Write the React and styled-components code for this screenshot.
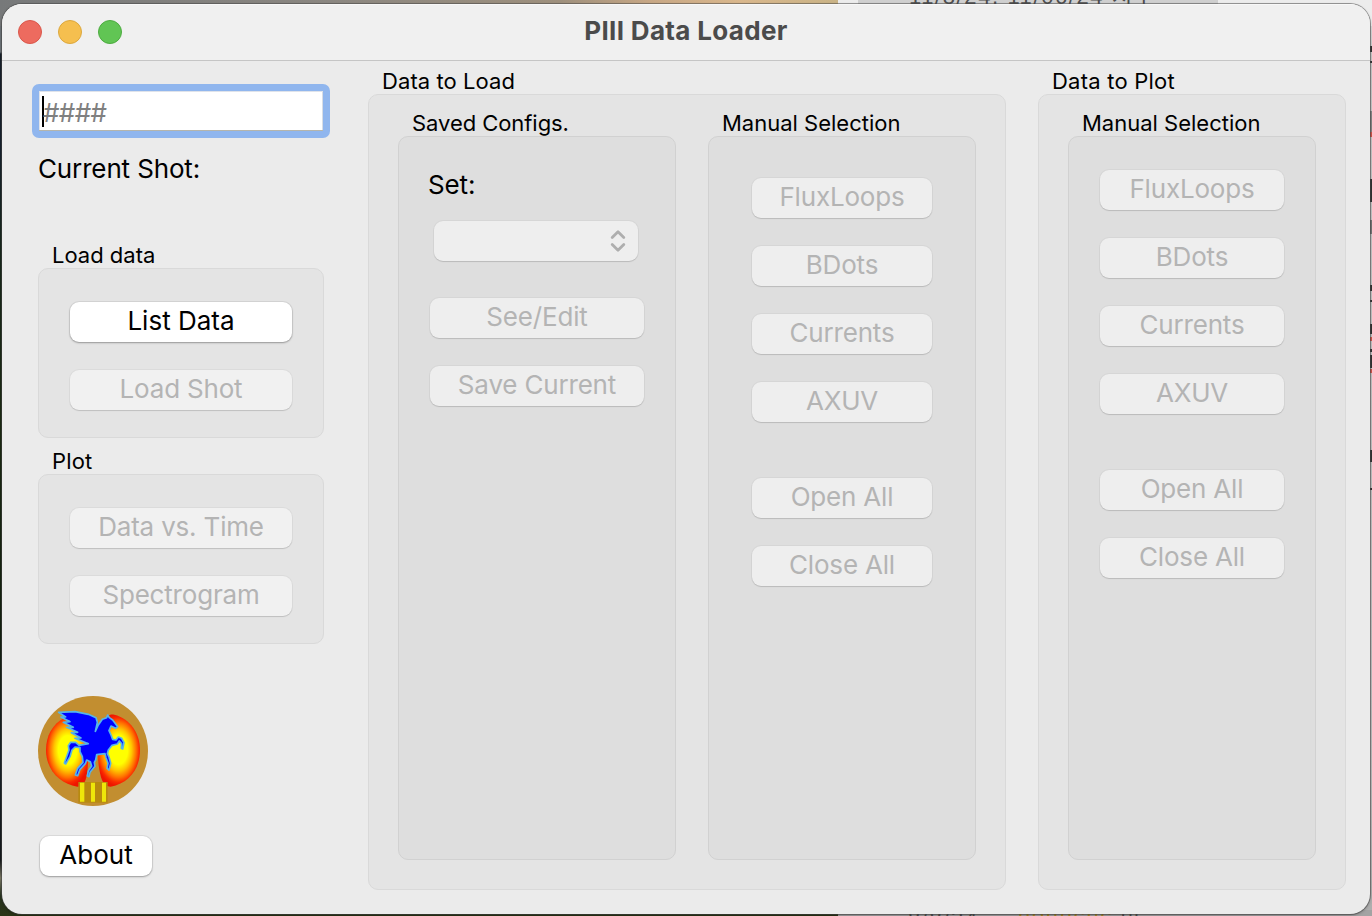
import React from "react";
import styled, { createGlobalStyle } from "styled-components";

const GlobalStyle = createGlobalStyle`
  * { box-sizing: border-box; }
  html, body { margin: 0; padding: 0; }
  body {
    width: 1372px;
    height: 916px;
    overflow: hidden;
    font-family: Inter, "Liberation Sans", "Noto Sans CJK KR", sans-serif;
    color: #000;
  }
`;

const Desktop = styled.div`
  display: grid;
  width: 1372px;
  height: 916px;
  overflow: hidden;
  & > * { grid-area: 1 / 1; }
`;

const Backdrop = styled.div`
  display: grid;
  grid-template-columns: 838px 1fr;
`;

const Landscape = styled.div`
  background:
    linear-gradient(90deg, #77797a 0, #8b8781 330px, #9e907d 560px, #c7a785 650px, #d9b78c 740px, #c9b386 838px) 0 0 / 100% 26px no-repeat,
    linear-gradient(180deg, #6d7479 26px, #6d7479 52px, #18202b 54px, #17222e 150px, #19291c 250px, #1d2c14 420px, #14210f 630px, #1a232a 760px, #15191b 860px, #7d7b67 878px, #27331f 896px, #2b3416 916px);
`;

const Sheet = styled.div`
  display: flex;
  flex-direction: column;
  justify-content: space-between;
  background: linear-gradient(180deg, #e9e9e9 0, #c9c9c9 60px, #bdbdbd 780px, #adadad 100%);
`;

const SheetRow = styled.div`
  display: flex;
  height: ${(p) => p.$height}px;
  overflow: hidden;
  padding-left: ${(p) => (p.$top ? 20 : 70)}px;
  background: ${(p) => (p.$top ? "#ececec" : "#a3a3a3")};
`;

const SheetCell = styled.div`
  flex: none;
  width: ${(p) => p.$width}px;
  height: 100%;
  padding-left: ${(p) => p.$inset || 0}px;
  background: ${(p) => p.$fill || "transparent"};
  color: ${(p) => p.$color || "#4d4d4d"};
  font: 22px/20px "Liberation Sans", "Noto Sans CJK KR", sans-serif;
  letter-spacing: ${(p) => p.$tracking || 0}px;
  white-space: pre;
`;

const CellText = styled.span`
  display: block;
  margin-top: ${(p) => p.$shift}px;
`;

const EdgeMarks = styled.div`
  justify-self: end;
  display: flex;
  flex-direction: column;
  width: 2px;
  padding-top: 46px;
`;

const Mark = styled.div`
  height: ${(p) => p.$h}px;
  margin-bottom: ${(p) => p.$after}px;
  background: ${(p) => p.$c || "#333"};
`;

const Window = styled.main`
  display: flex;
  flex-direction: column;
  width: 1368px;
  height: 910px;
  margin: 4px 0 0 2px;
  border-radius: 20px;
  overflow: hidden;
  background: #ebebeb;
  box-shadow: 0 0 0 1px rgba(70, 70, 70, 0.5), 0 1px 3px rgba(0, 0, 0, 0.4);
`;

const TitleBar = styled.header`
  display: grid;
  grid-template-columns: 1fr auto 1fr;
  align-items: center;
  flex: none;
  height: 57px;
  padding: 0 16px 1px;
  background: #f0f0f0;
  border-top: 1px solid #f8f8f8;
  border-bottom: 1px solid #c5c5c5;
`;

const Lights = styled.div`
  display: flex;
  gap: 16px;
`;

const Light = styled.span`
  width: 24px;
  height: 24px;
  border-radius: 50%;
  background: ${(p) => p.$fill};
  border: 1px solid ${(p) => p.$edge};
`;

const Title = styled.h1`
  margin: 0;
  padding-bottom: 2px;
  font-size: 26px;
  font-weight: 700;
  line-height: 32px;
  letter-spacing: 0.33px;
  color: #4b4b4b;
`;

const Content = styled.div`
  display: flex;
  align-items: flex-start;
  padding-left: 36px;
`;

const Sidebar = styled.aside`
  display: flex;
  flex-direction: column;
  align-items: flex-start;
  width: 286px;
  margin-right: 44px;
  padding-top: 23px;
`;

const ShotField = styled.div`
  display: flex;
  align-items: center;
  width: 298px;
  height: 54px;
  margin-left: -6px;
  border: 7px solid #90b6ee;
  border-radius: 7px;
  background: #fff;
  box-shadow: inset 0 -1px 0 #b5b5ac, inset 1px 1px 0 #dfe3ea, inset -1px 0 0 #d8dde5;
  padding-left: 3px;
`;

const Caret = styled.span`
  width: 2px;
  height: 31px;
  background: #000;
`;

const Placeholder = styled.span`
  margin-left: -1px;
  padding-top: 3px;
  font-size: 26px;
  line-height: 32px;
  letter-spacing: -0.6px;
  color: #808080;
`;

const Label = styled.div`
  height: 32px;
  margin: ${(p) => p.$top || 0}px 0 0 ${(p) => p.$left || 0}px;
  font-size: 26px;
  line-height: 32px;
  letter-spacing: -0.14px;
  white-space: nowrap;
`;

const GroupShell = styled.section`
  width: ${(p) => p.$width}px;
  margin-top: ${(p) => p.$top || 0}px;
`;

const GroupTitle = styled.h2`
  height: 26px;
  margin: 0;
  padding-left: 14px;
  font-size: 22px;
  font-weight: 400;
  line-height: 26px;
  letter-spacing: ${(p) => p.$tracking || 0}px;
  white-space: nowrap;
`;

const GroupBox = styled.div`
  display: flex;
  flex-direction: ${(p) => (p.$row ? "row" : "column")};
  gap: ${(p) => p.$gap ?? 28}px;
  height: ${(p) => p.$height}px;
  padding: ${(p) => p.$pad};
  border: 1px solid ${(p) => (p.$deep ? "#d1d1d1" : "#d9d9d9")};
  border-radius: 10px;
  background: ${(p) => (p.$deep ? "#dedede" : "#e4e4e4")};
`;

const PushButton = styled.button`
  display: flex;
  flex: none;
  align-items: center;
  justify-content: center;
  width: ${(p) => p.$width || "100%"};
  height: 40px;
  margin: ${(p) => p.$top || 0}px 0 0 ${(p) => p.$left || 0}px;
  padding: 0 0 2px;
  border: 0;
  border-radius: 9px;
  background: ${(p) => (p.disabled ? (p.$deep ? "#eeeeee" : "#f1f1f1") : "#fff")};
  box-shadow: ${(p) =>
    p.disabled
      ? "0 0 0 1px rgba(0,0,0,.035), 0 1px 1px rgba(0,0,0,.13)"
      : "0 0 0 1px rgba(0,0,0,.06), 0 1px 2px rgba(0,0,0,.3)"};
  color: ${(p) => (p.disabled ? "#b4b4b4" : "#000")};
  font: 400 26px/32px Inter, sans-serif;
  letter-spacing: ${(p) => (p.disabled ? -0.18 : 0)}px;
  white-space: nowrap;
`;

const PopUp = styled.div`
  display: flex;
  flex: none;
  align-items: center;
  justify-content: flex-end;
  width: 204px;
  height: 40px;
  margin: 20px 0 0 4px;
  padding-right: 12px;
  border-radius: 9px;
  background: #eee;
  box-shadow: 0 0 0 1px rgba(0,0,0,.035), 0 1px 1px rgba(0,0,0,.13);
`;

const LogoSvg = styled.svg`
  display: block;
  width: 110px;
  height: 110px;
  margin-top: 52px;
`;

const PlotColumn = styled.div`
  margin-left: 32px;
`;

function Group({ title, tracking, width, top, children, ...box }) {
  return (
    <GroupShell $width={width} $top={top}>
      <GroupTitle $tracking={tracking}>{title}</GroupTitle>
      <GroupBox {...box}>{children}</GroupBox>
    </GroupShell>
  );
}

function Chevrons() {
  return (
    <svg width="16" height="24" viewBox="0 0 16 24" fill="none" stroke="#aeaeae" strokeWidth="2.8" strokeLinecap="round" strokeLinejoin="round">
      <path d="M2.2 8.6 8 2.8l5.8 5.8M2.2 15.4 8 21.2l5.8-5.8" />
    </svg>
  );
}

function SunStops() {
  return (
    <>
      <stop offset=".4" stopColor="#ff0" />
      <stop offset=".58" stopColor="#ffc400" />
      <stop offset=".76" stopColor="#ff7200" />
      <stop offset=".9" stopColor="#fa2a00" />
      <stop offset="1" stopColor="#ee1500" />
    </>
  );
}

function PegasusLogo() {
  return (
    <LogoSvg viewBox="39 33 330 330" aria-label="Pegasus III">
      <defs>
        <radialGradient id="sunLeft" gradientUnits="userSpaceOnUse" cx="0" cy="0" r="1" gradientTransform="translate(128 195) scale(70 108)">
          <SunStops />
        </radialGradient>
        <radialGradient id="sunRight" gradientUnits="userSpaceOnUse" cx="0" cy="0" r="1" gradientTransform="translate(280 195) scale(70 108)">
          <SunStops />
        </radialGradient>
      </defs>
      <circle cx="204" cy="198" r="165" fill="#c28e30" />
      <path d="M118 98C82 118 63 152 63 195c0 60 42 102 94 110 12 1 22-8 27-28 6-28 6-60 4-90l-10-60z" fill="url(#sunLeft)" />
      <path d="M246 93c8-4 14-6 22-4 47 12 77 55 77 106 0 58-34 100-88 110-14 0-24-10-29-28-7-29-10-50-8-82l10-60z" fill="url(#sunRight)" />
      <path
        d="M101 82 150 80 190 88 213 98 217 112 211 139 220 120 232 103 245 98 248 90 253 98 263 105 278 125 272 130 258 123 252 137 258 150 263 163 273 165 280 156 290 160 297 173 293 192 289 190 290 176 283 168 277 177 261 181 250 195 247 206 252 216 257 235 252 255 246 250 249 235 243 218 240 206 215 209 212 225 208 232 210 244 195 262 192 275 187 273 190 258 200 243 196 230 185 225 181 236 165 253 158 272 151 270 158 250 174 232 172 215 165 200 165 188 150 186 141 195 135 215 122 237 118 234 126 212 132 195 130 182 137 172 152 172 162 181 190 176 150 160 168 159 139 143 158 142 125 127 145 127 115 112 135 110 108 96 122 96Z"
        fill="#00f"
        stroke="#55b4ea"
        strokeWidth="5"
        strokeLinejoin="round"
      />
      <path d="M160 291h88v62h-88z" fill="#b88a0e" />
      <path d="M165 293h13v57h-13zM198 293h12v57h-12zM231 293h12v57h-12z" fill="#eee60a" />
    </LogoSvg>
  );
}

const signals = ["FluxLoops", "BDots", "Currents", "AXUV"];

function SelectionButtons() {
  return (
    <>
      {signals.map((name) => (
        <PushButton key={name} disabled $deep>{name}</PushButton>
      ))}
      <PushButton disabled $deep $top={28}>Open All</PushButton>
      <PushButton disabled $deep>Close All</PushButton>
    </>
  );
}

export default function App() {
  return (
    <>
      <GlobalStyle />
      <Desktop>
        <Backdrop>
          <Landscape />
          <Sheet>
            <SheetRow $height={26} $top>
              <SheetCell $width={360} $inset={51} $fill="#cfcfcf" $tracking={1.6}>
                <CellText $shift={-13}>11/8/24, 11/06/24 시구</CellText>
              </SheetCell>
            </SheetRow>
            <SheetRow $height={6}>
              <SheetCell $width={110} $tracking={1.6}>
                <CellText $shift={-1}>8/8/24</CellText>
              </SheetCell>
              <SheetCell $width={102} $color="#b58b22" $tracking={1.7}>
                <CellText $shift={-4}>nonncnc</CellText>
              </SheetCell>
              <SheetCell $width={40}>
                <CellText $shift={-1}>미</CellText>
              </SheetCell>
            </SheetRow>
          </Sheet>
        </Backdrop>
        <EdgeMarks>
          <Mark $h={6} $after={9} />
          <Mark $h={2} $after={48} />
          <Mark $h={21} $after={0} $c="#888" />
          <Mark $h={5} $after={42} $c="#d2554b" />
          <Mark $h={23} $after={18} />
          <Mark $h={14} $after={51} $c="#777" />
          <Mark $h={6} $after={9} />
          <Mark $h={2} $after={22} />
          <Mark $h={10} $after={3} />
          <Mark $h={4} $after={8} $c="#d2554b" />
          <Mark $h={3} $after={3} />
          <Mark $h={13} $after={1} />
          <Mark $h={4} $after={77} $c="#d2554b" />
          <Mark $h={12} $after={26} />
          <Mark $h={2} $after={0} />
        </EdgeMarks>
        <Window>
          <TitleBar>
            <Lights>
              <Light $fill="#ed6b5f" $edge="#d9574b" />
              <Light $fill="#f5bf4f" $edge="#dba73e" />
              <Light $fill="#61c554" $edge="#4dab40" />
            </Lights>
            <Title>PIII Data Loader</Title>
            <span />
          </TitleBar>
          <Content>
            <Sidebar>
              <ShotField>
                <Caret />
                <Placeholder>####</Placeholder>
              </ShotField>
              <Label $top={15}>Current Shot:</Label>
              <Group title="Load data" width={286} top={57} $height={170} $pad="33px 31px">
                <PushButton>List Data</PushButton>
                <PushButton disabled>Load Shot</PushButton>
              </Group>
              <Group title="Plot" tracking={0.15} width={286} top={10} $height={170} $pad="33px 31px">
                <PushButton disabled>Data vs. Time</PushButton>
                <PushButton disabled>Spectrogram</PushButton>
              </Group>
              <PegasusLogo />
              <PushButton $width="112px" $top={30} $left={2}>About</PushButton>
            </Sidebar>

            <Group title="Data to Load" tracking={0.08} width={638} top={7} $row $gap={32} $height={796} $pad="15px 29px">
              <Group title="Saved Configs." tracking={-0.06} width={278} $deep $height={724} $gap={0} $pad="32px 31px 0 31px">
                <Label $left={-2}>Set:</Label>
                <PopUp><Chevrons /></PopUp>
                <PushButton disabled $deep $top={37}>See/Edit</PushButton>
                <PushButton disabled $deep $top={28}>Save Current</PushButton>
              </Group>
              <Group title="Manual Selection" width={268} $deep $height={724} $pad="41px 43px">
                <SelectionButtons />
              </Group>
            </Group>
            <PlotColumn>
              <Group title="Data to Plot" tracking={0.22} width={308} top={7} $row $height={796} $pad="15px 29px">
                <Group title="Manual Selection" width={248} $deep $height={724} $pad="33px 31px">
                  <SelectionButtons />
                </Group>
              </Group>
            </PlotColumn>
          </Content>
        </Window>
      </Desktop>
    </>
  );
}
